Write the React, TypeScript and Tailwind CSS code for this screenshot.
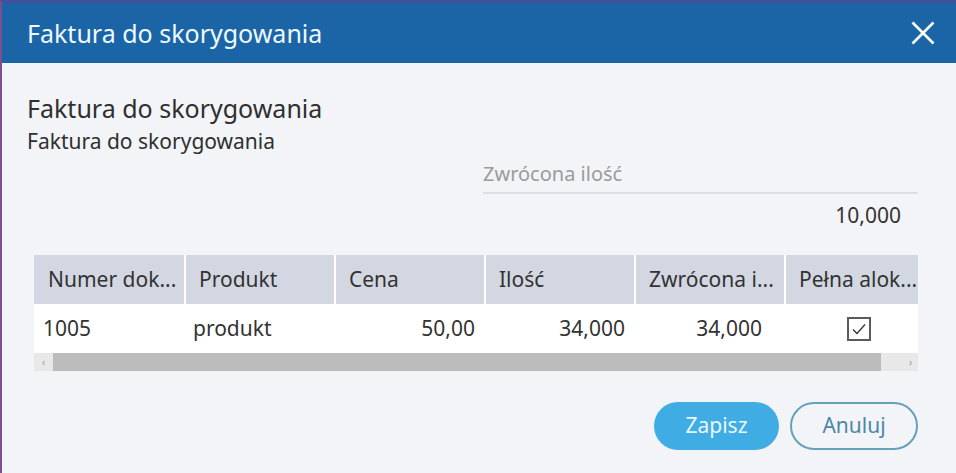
import React from "react";

const columns = [
  { title: "Numer dok...", value: "1005", align: "left" },
  { title: "Produkt", value: "produkt", align: "left" },
  { title: "Cena", value: "50,00", align: "right" },
  { title: "Ilość", value: "34,000", align: "right" },
  { title: "Zwrócona i...", value: "34,000", align: "right-wide" },
  { title: "Pełna alok...", value: null, align: "center" },
];

function CloseIcon() {
  return (
    <svg width="24" height="24" viewBox="0 0 24 24" fill="none" stroke="currentColor" strokeWidth="2.6">
      <path d="M1.5 1.5 22.5 22.5M22.5 1.5 1.5 22.5" />
    </svg>
  );
}

function CheckedBox() {
  return (
    <div className="flex h-[24px] w-[24px] items-center justify-center border-2 border-[#5b5b5b] bg-white">
      <svg width="16" height="14" viewBox="0 0 16 14" fill="none" stroke="#333" strokeWidth="1.3">
        <path d="M2 7.5 6 11.5 14 2.5" />
      </svg>
    </div>
  );
}

export default function App() {
  return (
    <div className="flex h-[473px] w-[956px] flex-col overflow-hidden border-l-[2px] border-t-[3px] border-l-[#7d4e91] border-t-[#464f9c] bg-[#f2f4f8] font-['Noto_Sans','Open_Sans',sans-serif] text-[#333]">
      <div className="flex h-[60px] shrink-0 items-center justify-between bg-[#1b65a6] pl-[25px] pr-[21px] text-[#eef8ff]">
        <h1 className="text-[25px] leading-[32px]">Faktura do skorygowania</h1>
        <button className="text-white">
          <CloseIcon />
        </button>
      </div>

      <div className="flex flex-1 flex-col pl-[25px] pr-[38px]">
        <div className="mt-[29px] text-[25px] leading-[32px] text-[#2f2f2f]">Faktura do skorygowania</div>
        <div className="mt-[3px] text-[21px] leading-[28px] text-[#2f2f2f]">Faktura do skorygowania</div>

        <div className="ml-auto mt-[6px] w-[435px]">
          <div className="text-[20px] leading-[26px] text-[#9b9b9b]">Zwrócona ilość</div>
          <div className="mt-[5px] h-[2px] bg-[#dcdee2]" />
          <div className="mt-[7px] pr-[17px] text-right text-[21px] leading-[28px]">10,000</div>
        </div>

        <div className="ml-[7px] mt-[26px] overflow-hidden bg-white">
          <div className="flex h-[49px] bg-[#d3d7e1]">
            {columns.map((col, i) => (
              <div
                key={col.title}
                className={
                  i === 0
                    ? "flex w-[150px] shrink-0 items-center pl-[14px]"
                    : "flex w-[150px] shrink-0 items-center border-l-[2px] border-white pl-[13px]"
                }
              >
                <span className="whitespace-nowrap text-[21px]">{col.title}</span>
              </div>
            ))}
          </div>
          <div className="flex h-[49px] bg-white text-[21px]">
            {columns.map((col) => (
              <div
                key={col.title}
                className={
                  col.align === "left"
                    ? "flex w-[150px] shrink-0 items-center pl-[9px]"
                    : col.align === "right"
                      ? "flex w-[150px] shrink-0 items-center justify-end pr-[9px]"
                      : col.align === "right-wide"
                        ? "flex w-[150px] shrink-0 items-center justify-end pr-[22px]"
                        : "flex w-[150px] shrink-0 items-center justify-center"
                }
              >
                {col.value ?? <CheckedBox />}
              </div>
            ))}
          </div>
          <div className="flex h-[18px] bg-[#e8e8e8]">
            <div className="flex w-[19px] items-center justify-center text-[10px] text-[#9a9a9a]">‹</div>
            <div className="w-[828px] bg-[#bcbcbc]" />
            <div className="flex flex-1 items-center justify-end pr-[6px] text-[10px] text-[#9a9a9a]">›</div>
          </div>
        </div>

        <div className="mt-[31px] flex justify-end gap-[11px]">
          <button className="h-[48px] w-[125px] rounded-full bg-[#3fade3] text-[21px] text-[#eaf7ff]">Zapisz</button>
          <button className="h-[48px] w-[128px] rounded-full border-2 border-[#64a2b9] text-[21px] text-[#4c88a4]">Anuluj</button>
        </div>
      </div>
    </div>
  );
}
